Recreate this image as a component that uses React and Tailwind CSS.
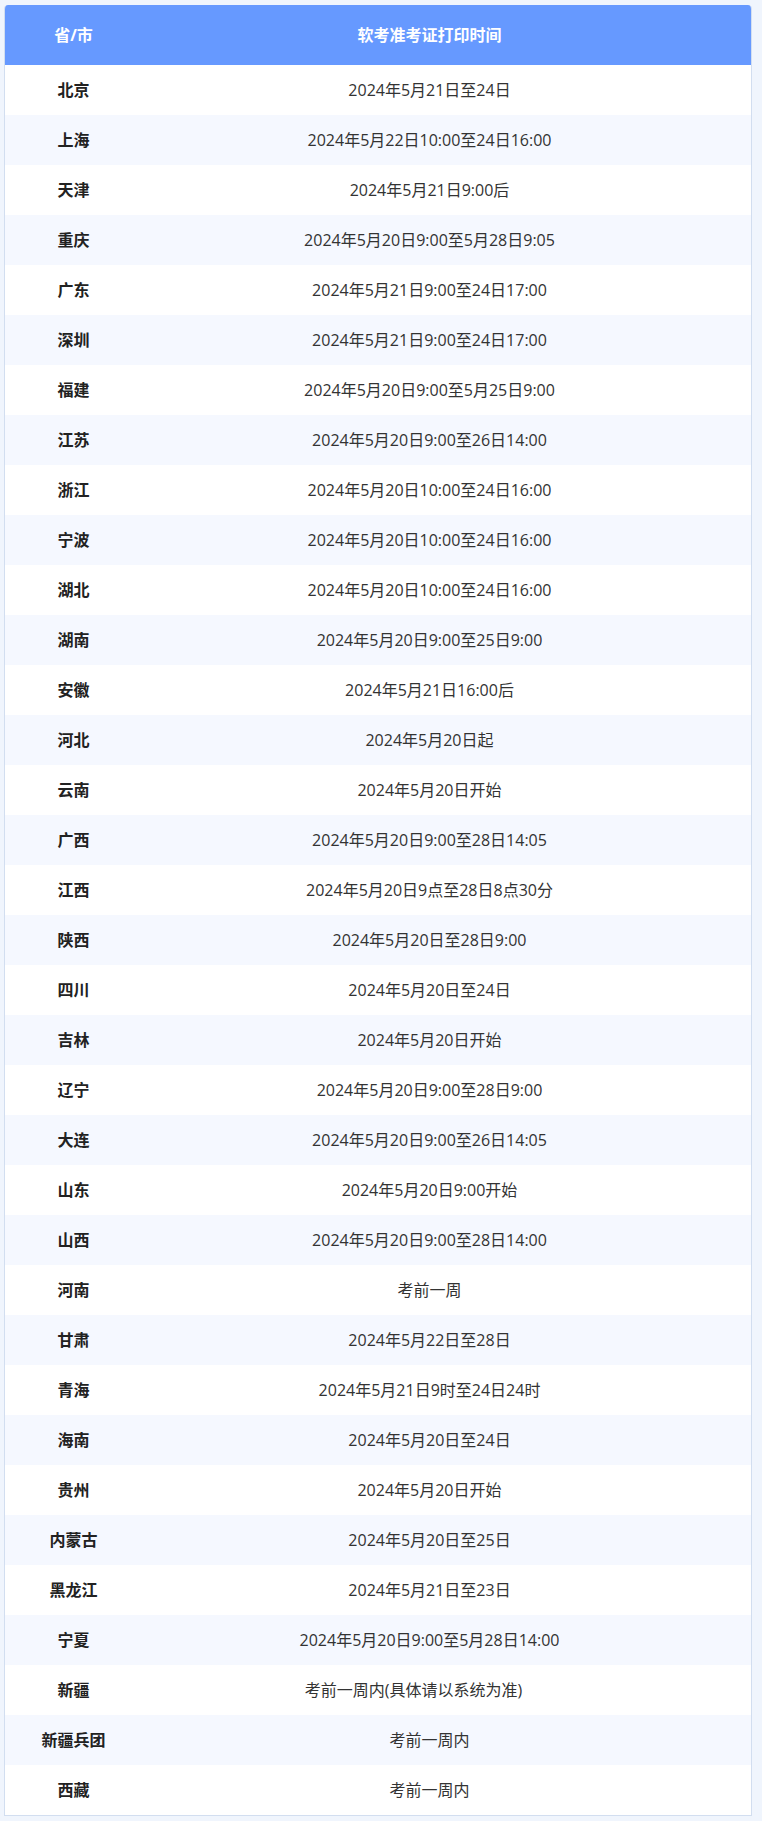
import React from 'react';

// 软考准考证打印时间 table
const rows = [
  ['北京', '2024年5月21日至24日'],
  ['上海', '2024年5月22日10:00至24日16:00'],
  ['天津', '2024年5月21日9:00后'],
  ['重庆', '2024年5月20日9:00至5月28日9:05'],
  ['广东', '2024年5月21日9:00至24日17:00'],
  ['深圳', '2024年5月21日9:00至24日17:00'],
  ['福建', '2024年5月20日9:00至5月25日9:00'],
  ['江苏', '2024年5月20日9:00至26日14:00'],
  ['浙江', '2024年5月20日10:00至24日16:00'],
  ['宁波', '2024年5月20日10:00至24日16:00'],
  ['湖北', '2024年5月20日10:00至24日16:00'],
  ['湖南', '2024年5月20日9:00至25日9:00'],
  ['安徽', '2024年5月21日16:00后'],
  ['河北', '2024年5月20日起'],
  ['云南', '2024年5月20日开始'],
  ['广西', '2024年5月20日9:00至28日14:05'],
  ['江西', '2024年5月20日9点至28日8点30分'],
  ['陕西', '2024年5月20日至28日9:00'],
  ['四川', '2024年5月20日至24日'],
  ['吉林', '2024年5月20日开始'],
  ['辽宁', '2024年5月20日9:00至28日9:00'],
  ['大连', '2024年5月20日9:00至26日14:05'],
  ['山东', '2024年5月20日9:00开始'],
  ['山西', '2024年5月20日9:00至28日14:00'],
  ['河南', '考前一周'],
  ['甘肃', '2024年5月22日至28日'],
  ['青海', '2024年5月21日9时至24日24时'],
  ['海南', '2024年5月20日至24日'],
  ['贵州', '2024年5月20日开始'],
  ['内蒙古', '2024年5月20日至25日'],
  ['黑龙江', '2024年5月21日至23日'],
  ['宁夏', '2024年5月20日9:00至5月28日14:00'],
  ['新疆', '考前一周内(具体请以系统为准)', true],
  ['新疆兵团', '考前一周内'],
  ['西藏', '考前一周内'],
];

export default function App() {
  return (
    <div className="min-h-screen bg-[#f0f5fd] pt-[5px] pb-[6px] pl-[4px] font-['Open_Sans','Noto_Sans_CJK_SC',sans-serif] text-[16px] text-[#333333]">
      <div className="w-[748px] overflow-hidden rounded-t-[4px] border-x border-b border-[#d2def0] bg-white">
        {/* header */}
        <div className="grid h-[60px] grid-cols-[137px_1fr] items-center bg-[#6699ff] font-bold text-white">
          <div className="text-center">省/市</div>
          <div className="pr-[34px] text-center">软考准考证打印时间</div>
        </div>

        {/* rows */}
        {rows.map(([city, time, trailing], i) => (
          <div
            key={city}
            className={`grid h-[50px] grid-cols-[137px_1fr] items-center ${i % 2 === 1 ? 'bg-[#f5f8ff]' : 'bg-white'}`}
          >
            <div className="text-center font-semibold text-[#222222]">{city}</div>
            <div className="pr-[34px] text-center">
              {time}
              {/* source cell has trailing blank space */}
              {trailing && <span className="inline-block w-[32px]" />}
            </div>
          </div>
        ))}
      </div>
    </div>
  );
}
